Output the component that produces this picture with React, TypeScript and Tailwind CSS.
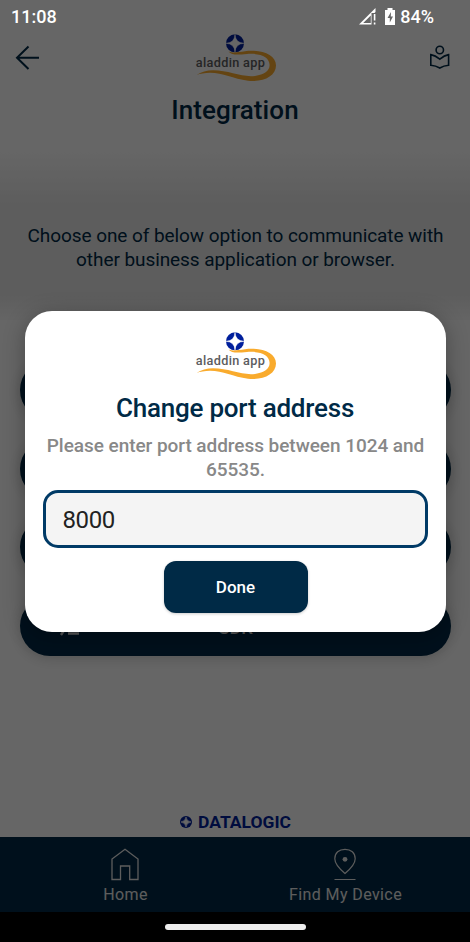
import React from "react";

const options = ["Web Socket", "Intent", "HTTP", "SDK"];

function Star({ className }: { className?: string }) {
  return (
    <svg viewBox="0 0 18 18" className={className} aria-hidden="true">
      <circle cx="9" cy="9" r="9" fill="#001f9c" />
      <path d="M9 1.5Q9.8 8.2 16.5 9Q9.8 9.8 9 16.5Q8.2 9.8 1.5 9Q8.2 8.2 9 1.5Z" fill="white" stroke="white" strokeWidth="1" />
    </svg>
  );
}

function AladdinLogo() {
  return (
    <svg viewBox="0 0 82 49" className="h-[49px] w-[82px] shrink-0" role="img" aria-label="aladdin app">
      <circle cx="40" cy="10.3" r="9" fill="#001f9c" />
      <path d="M40 1.3Q40.4 9.9 49 10.3Q40.4 10.7 40 19.3Q39.6 10.7 31 10.3Q39.6 9.9 40 1.3Z" fill="white" stroke="white" strokeWidth="0.5" />
      <path d="M33.5 18.5C38 20.3 43 19 50 18.2C66 16.2 81 21.6 81 32.6C81 43.5 68 49.4 53 47.8C38 45.8 28 39.8 15 39.8C10 39.9 5 40.8 1.5 41.9C6 39.1 12 37.3 18 37.3C34 37.3 47 44.6 60 42.9C69 41.6 74.6 38 74.6 32C74.6 23.8 65 20 52 20.9C43 21.8 37 22.5 33.5 18.5Z" fill="#f9ab2d" />
      <text x="0.8" y="34.2" textLength="69" lengthAdjust="spacing" className="font-[Roboto,sans-serif] text-[12.7px] font-medium" fill="#5c5c60">aladdin app</text>
    </svg>
  );
}

export default function App() {
  return (
    <div className="relative flex h-[942px] w-[470px] flex-col overflow-hidden bg-white font-[Roboto,sans-serif] text-[#002a46]">
      <header className="flex h-[98px] shrink-0 items-start justify-between pt-[33px] pr-[20px] pl-[15px]">
        <svg viewBox="0 0 26 26" className="mt-[12px] h-[26px] w-[26px]" fill="none" stroke="#002a46" strokeWidth="2">
          <path d="M24 12.7H2M13.5 1.5 2 12.7 13.5 24" />
        </svg>
        <div className="ml-[2px]"><AladdinLogo /></div>
        <svg viewBox="0 0 22 26" className="mt-[12px] h-[26px] w-[22px]" fill="none" stroke="#002a46" strokeWidth="1.6">
          <circle cx="11.8" cy="5" r="3.7" />
          <path d="M11.8 14.2Q7.3 10.3 2.8 9.6V20.2Q7.8 20.5 11.8 23Q15.8 20.5 20.6 20.2V9.6Q16.3 10.3 11.8 14.2Z" />
        </svg>
      </header>
      <h1 className="h-[52px] shrink-0 text-center text-[26px] leading-[24px] font-medium tracking-[0.1px]">Integration</h1>
      <section className="h-[170px] shrink-0 bg-[linear-gradient(#fff_0px,#e8e8e8_56px,#e8e8e8_144px,#f4f4f4_160px,#fbfbfb_170px)] pt-[74px] text-center text-[19px] leading-[24px] tracking-[-0.07px] whitespace-nowrap">
        <p className="pl-[1px]">Choose one of below option to communicate with<br />other business application or browser.</p>
      </section>
      <main className="mt-[40px] flex flex-col gap-[18.5px] pr-[19px] pl-[20px]">
        {options.map((label) => (
          <div key={label} className="relative flex h-[60px] shrink-0 items-center justify-center rounded-full bg-[#002a46] pt-[4px] text-[18px] font-medium text-[#ddd] shadow-[0_2px_14px_rgba(0,0,0,0.18)]">
            {label}
            <svg viewBox="0 0 22 22" className="absolute top-[20px] left-[39px] h-[22px] w-[22px]" fill="none" stroke="#ddd" strokeWidth="2.4">
              <path d="M2 2 8 10 2 19M9 17.5H20" />
            </svg>
          </div>
        ))}
      </main>
      <footer className="mt-auto shrink-0">
        <div className="flex h-[23px] items-start justify-center pl-[7px]">
          <Star className="mt-[2px] mr-[5px] h-[12px] w-[12px] shrink-0" />
          <svg viewBox="0 0 100 20" className="h-[20px] w-[100px]">
            <text x="1" y="14.2" textLength="93" lengthAdjust="spacingAndGlyphs" className="text-[16.5px] font-bold" fill="#001f9c">DATALOGIC</text>
          </svg>
        </div>
        <nav className="grid h-[75px] grid-cols-[250px_190px] bg-[#002a46] text-[16px] tracking-[0.4px] text-[#e8e8e8]">
          <div className="flex flex-col items-center pt-[11px]">
            <svg viewBox="0 0 28 33" className="h-[33px] w-[28px]" fill="none" stroke="currentColor" strokeWidth="1.3">
              <path d="M1 31.5V11L14 1.3 27 11V31.5H18.7V18H9.5V31.5Z" />
            </svg>
            <span className="mt-[2px] pl-[1px] leading-[24px]">Home</span>
          </div>
          <div className="flex flex-col items-center pt-[11px]">
            <svg viewBox="0 0 24 33" className="h-[33px] w-[24px]" fill="none" stroke="currentColor" strokeWidth="1.2">
              <path d="M12 25.5Q1.8 17 1.8 10.8C1.8 4.8 6 1.3 12 1.3S22.2 4.8 22.2 10.8Q22.2 17 12 25.5ZM1.5 31.5H22.5" />
              <circle cx="12" cy="11.3" r="2.4" fill="currentColor" stroke="none" />
            </svg>
            <span className="mt-[2px] pl-[1px] leading-[24px] whitespace-nowrap">Find My Device</span>
          </div>
        </nav>
        <div className="h-[30px] bg-black" />
      </footer>

      <div className="absolute inset-0 flex flex-col items-center bg-black/60">
        <div className="flex h-[33px] w-full shrink-0 items-center justify-between pr-[36px] pl-[11px] text-[18px] font-medium text-white">
          <span>11:08</span>
          <span className="flex items-center">
            <svg viewBox="0 0 38 18" className="mr-[3px] h-[18px] w-[38px]">
              <path d="M0 16.5 16.5 0V4L13.2 7.3V16.5ZM4.2 15H11.8V7.4Z" fill="white" fillRule="evenodd" />
              <path d="M12.5 5H18V18H12.5Z" fill="#666" />
              <path d="M15.6 6V12.5M15.6 14.5V16.5" stroke="white" strokeWidth="1.6" />
              <path d="M26 2H28.5V0H33.5V2H36V17H26Z" fill="white" />
              <path d="M32 4 28.5 10H30.8V14.5L34 8.5H31.8Z" fill="#666" />
            </svg>
            84%
          </span>
        </div>
        <section role="dialog" className="mt-[278px] flex h-[321px] w-[421px] shrink-0 flex-col items-center rounded-[27px] bg-white pt-[20px] shadow-[0_4px_22px_rgba(0,0,0,0.3)]">
          <div className="pl-[2px]"><AladdinLogo /></div>
          <h2 className="mt-[12px] text-[26px] leading-[32px] font-medium tracking-[-0.22px]">Change port address</h2>
          <p className="mt-[10px] pl-[1px] text-center text-[19px] leading-[24px] font-medium tracking-[-0.05px] whitespace-nowrap text-[#888]">Please enter port address between 1024 and<br />65535.</p>
          <input aria-label="Port address" defaultValue="8000" className="mt-[8px] h-[58px] w-[385px] shrink-0 rounded-[15px] border-3 border-[#003a66] bg-[#f4f4f4] px-[17px] pt-[2px] text-[24px] tracking-[-0.4px] text-[#222] outline-none" />
          <button className="mt-[13px] ml-[1px] h-[52px] w-[144px] shrink-0 rounded-[12px] bg-[#002a46] pt-[1px] text-[17px] font-medium text-white shadow-[0_1px_3px_rgba(0,0,0,0.2)]">Done</button>
        </section>
        <div className="mt-auto mb-[12px] h-[6px] w-[141px] rounded-full bg-[#eee]" />
      </div>
    </div>
  );
}
